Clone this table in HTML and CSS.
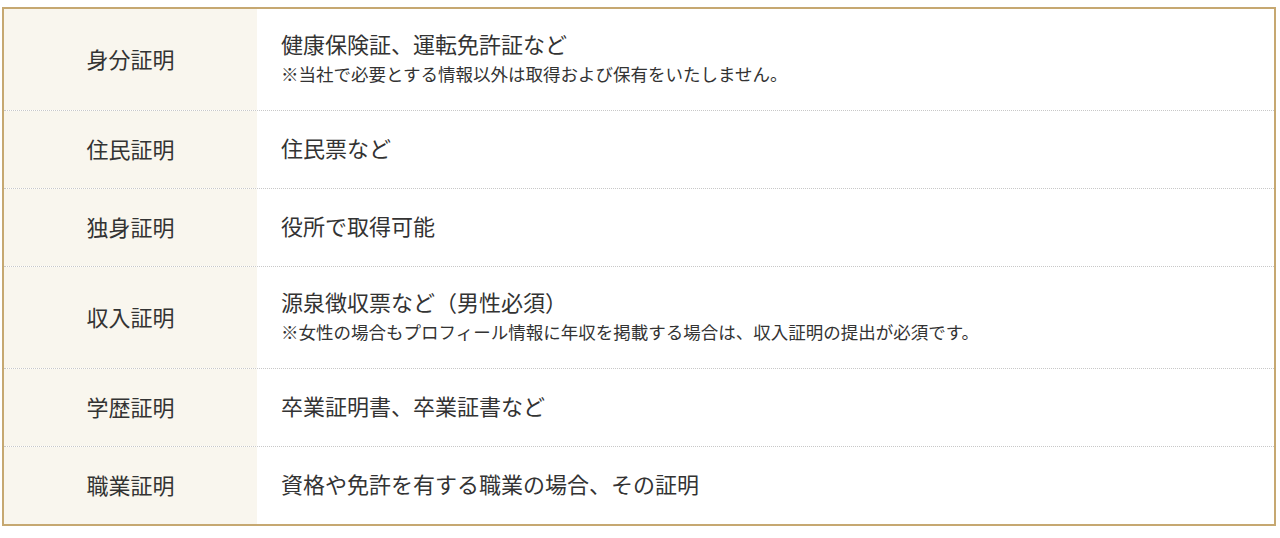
FILE: index.html
```html
<!DOCTYPE html>
<html lang="ja">
<head>
<meta charset="utf-8">
<title>必要書類</title>
<link rel="stylesheet" href="styles.css">
</head>
<body>
<div class="page">
  <div class="table">
    <div class="row">
      <div class="label">身分証明</div>
      <div class="content">
        <p class="main">健康保険証、運転免許証など</p>
        <p class="note">※当社で必要とする情報以外は取得および保有をいたしません。</p>
      </div>
    </div>
    <div class="row">
      <div class="label">住民証明</div>
      <div class="content"><p class="main">住民票など</p></div>
    </div>
    <div class="row">
      <div class="label">独身証明</div>
      <div class="content"><p class="main">役所で取得可能</p></div>
    </div>
    <div class="row">
      <div class="label">収入証明</div>
      <div class="content">
        <p class="main">源泉徴収票など（男性必須）</p>
        <p class="note">※女性の場合もプロフィール情報に年収を掲載する場合は、収入証明の提出が必須です。</p>
      </div>
    </div>
    <div class="row">
      <div class="label">学歴証明</div>
      <div class="content"><p class="main">卒業証明書、卒業証書など</p></div>
    </div>
    <div class="row">
      <div class="label">職業証明</div>
      <div class="content"><p class="main">資格や免許を有する職業の場合、その証明</p></div>
    </div>
  </div>
</div>
</body>
</html>
```

FILE: styles.css
```css
* { box-sizing: border-box; }
html, body {
  margin: 0;
  padding: 0;
  background: #ffffff;
}
body {
  font-family: "Noto Sans CJK JP", "Noto Sans", sans-serif;
  color: #333333;
}
.page {
  padding: 7px 4px 0 2px;
}
.table {
  border: 2px solid #c6a871;
  display: flex;
  flex-direction: column;
}
.row {
  display: grid;
  grid-template-columns: 253px 1fr;
  min-height: 78px;
  border-bottom: 1px dotted #c8c8c8;
}
.row:last-child {
  border-bottom: none;
  min-height: 77px;
}
.label {
  background: #f9f6ee;
  display: flex;
  align-items: center;
  justify-content: center;
  padding-bottom: 4px;
  font-size: 22px;
}
.content {
  padding: 17px 24px 21px;
  display: flex;
  flex-direction: column;
  justify-content: center;
}
.main {
  margin: 0;
  font-size: 22px;
  line-height: 35px;
}
.note {
  margin: 0 0 3px;
  font-size: 17.5px;
  line-height: 25px;
}
```
